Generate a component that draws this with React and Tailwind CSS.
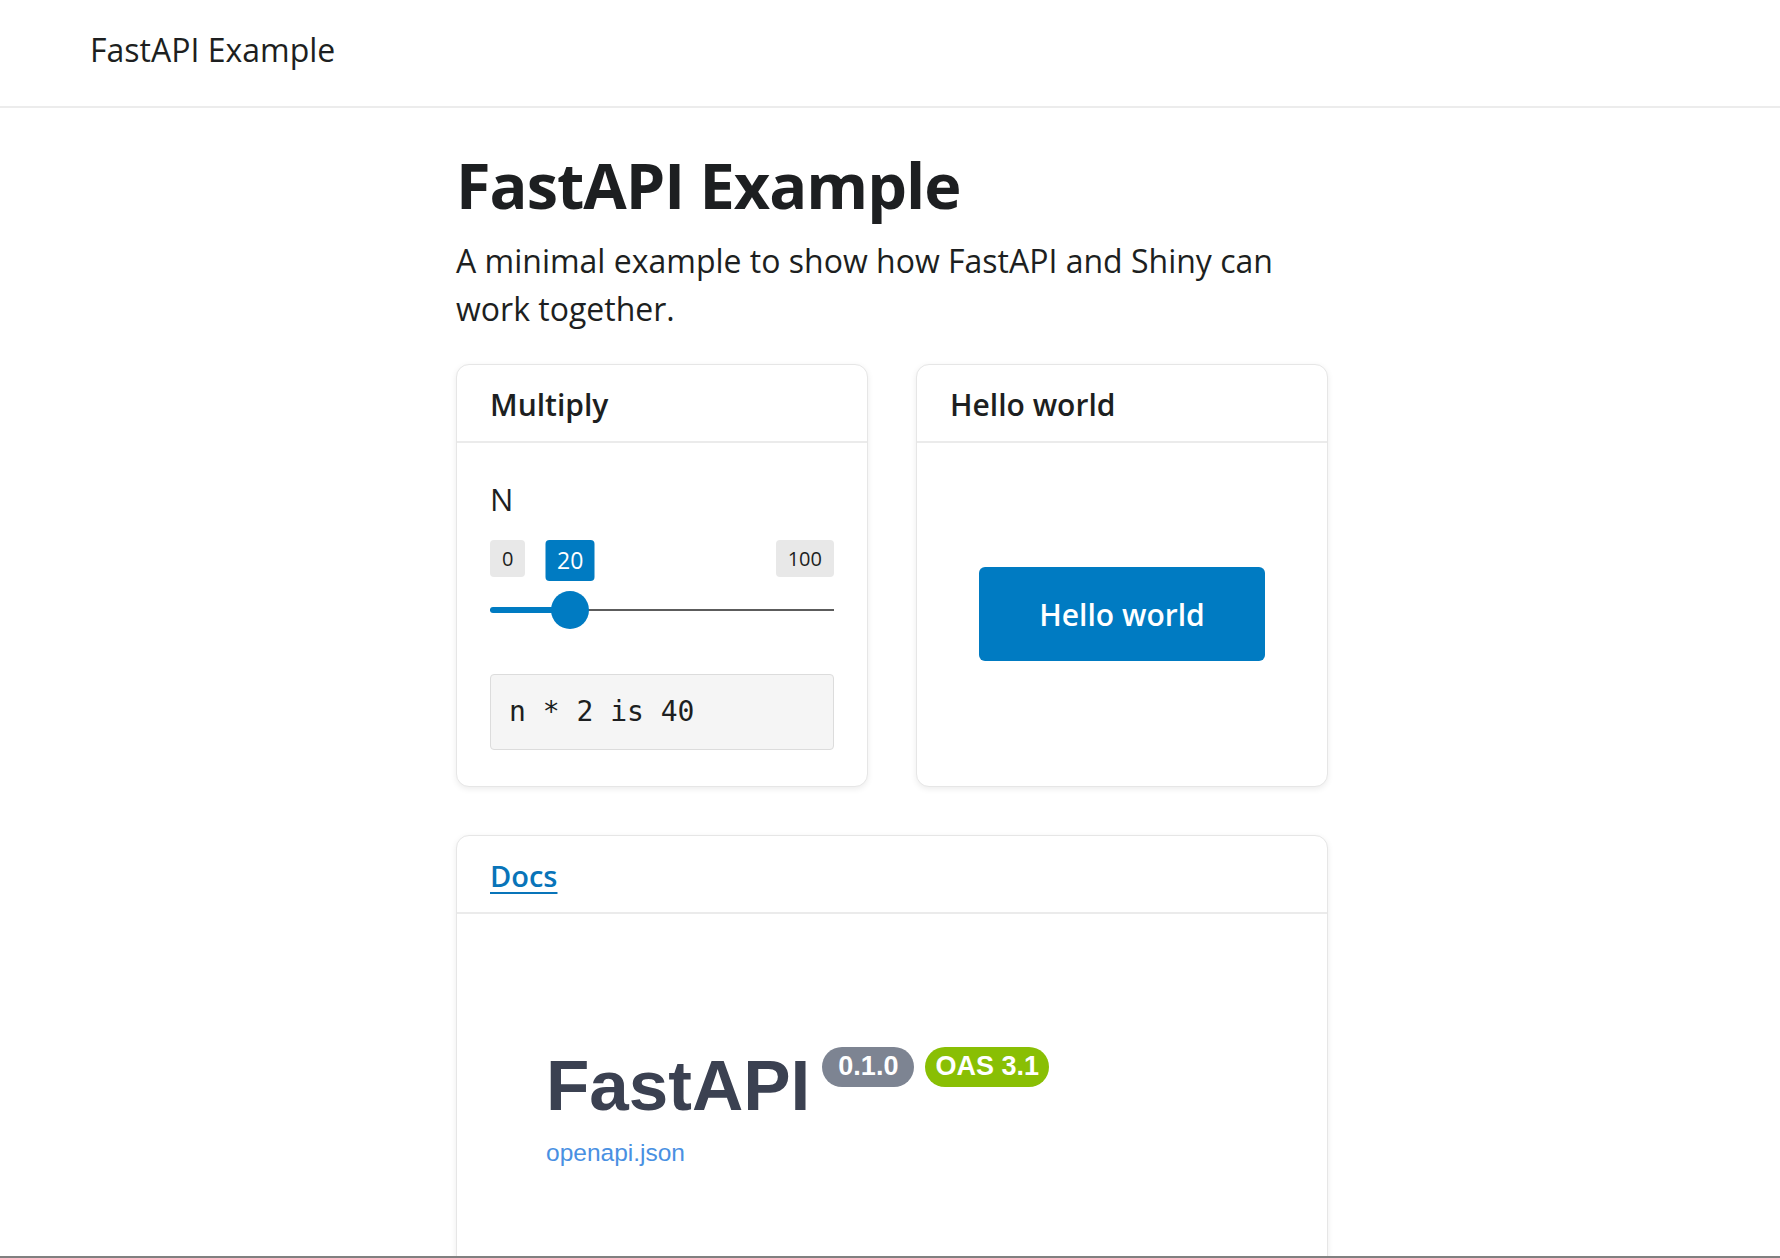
import React from 'react'

const sans = { fontFamily: '"Open Sans", "Noto Sans", sans-serif' }

const Card = ({ header, children, className = '' }) => (
  <div className={`bg-white border border-[#e6e6e6] rounded-[13px] shadow-[0_2px_6px_rgba(0,0,0,0.08)] flex flex-col ${className}`}>
    <div className="h-[78px] px-[33px] pt-[4px] flex items-center border-b-2 border-[#ebebeb]">
      {header}
    </div>
    {children}
  </div>
)

const Slider = ({ min = 0, max = 100, value = 20 }) => {
  const width = 344
  const r = 19
  const pos = r + ((width - 2 * r) * (value - min)) / (max - min)
  return (
    <div className="relative mt-[18px] h-[90px]">
      <div className="flex justify-between">
        <span className="h-[37px] px-[12px] flex items-center rounded-[4px] bg-[#e8e8e8] text-[20px] text-[#1d1f21]">{min}</span>
        <span className="h-[37px] px-[12px] flex items-center rounded-[4px] bg-[#e8e8e8] text-[20px] text-[#1d1f21]">{max}</span>
      </div>
      <span
        className="absolute top-0 h-[41px] w-[49px] -translate-x-1/2 flex items-center justify-center rounded-[4px] bg-[#007bc2] text-[23px] text-white"
        style={{ left: pos }}
      >
        {value}
      </span>
      <div className="absolute left-0 right-0 top-[69px] h-[2px] bg-[#5c5c5c]" />
      <div className="absolute left-0 top-[67px] h-[6px] rounded-l-full bg-[#007bc2]" style={{ width: pos }} />
      <div
        className="absolute top-[51px] h-[38px] w-[38px] -translate-x-1/2 rounded-full bg-[#007bc2]"
        style={{ left: pos }}
      />
    </div>
  )
}

export default function App() {
  return (
    <div className="min-h-screen bg-white text-[#1d1f21]" style={sans}>
      {/* Navbar */}
      <div className="h-[108px] border-b-2 border-[#ececec] flex items-center pl-[90px] pb-[6px]">
        <span className="text-[32px] leading-none">FastAPI Example</span>
      </div>

      <div className="w-[872px] ml-[456px] pt-[39px]">
        <h1 className="text-[63px] font-bold leading-[1.2] tracking-[-1px] text-[#1d1f21]">FastAPI Example</h1>
        <p className="mt-[14px] text-[32px] leading-[48px]">
          A minimal example to show how FastAPI and Shiny can work together.
        </p>

        <div className="grid grid-cols-2 gap-[48px] mt-[31px]">
          <Card header={<span className="text-[30px] font-semibold">Multiply</span>} className="h-[423px]">
            <div className="px-[33px] pt-[33px]">
              <div className="text-[31px] leading-[1.5]">N</div>
              <Slider />
              <div className="mt-[44px] h-[76px] border border-[#dcdcdc] rounded-[4px] bg-[#f5f5f5] flex items-center px-[18px]">
                <span className="text-[28px] text-[#1d1f21]" style={{ fontFamily: '"DejaVu Sans Mono", monospace' }}>
                  n * 2 is 40
                </span>
              </div>
            </div>
          </Card>

          <Card header={<span className="text-[30px] font-semibold">Hello world</span>} className="h-[423px]">
            <div className="flex-1 flex items-center justify-center">
              <button className="w-[286px] h-[94px] rounded-[6px] bg-[#007bc2] text-white text-[30px] font-semibold">
                Hello world
              </button>
            </div>
          </Card>
        </div>

        <Card
          header={
            <a href="#" className="text-[29px] font-semibold text-[#0874b9] underline underline-offset-[5px] decoration-2">
              Docs
            </a>
          }
          className="mt-[48px] h-[600px]"
        >
          <div className="pl-[89px] pt-[136px]" style={{ fontFamily: '"Liberation Sans", Arial, sans-serif' }}>
            <div className="flex items-start">
              <span className="text-[71px] font-bold leading-none text-[#3b4151]">FastAPI</span>
              <span className="ml-[12px] mt-[-3px] h-[40px] px-[16px] flex items-center rounded-full bg-[#7d8492] text-white text-[27px] font-bold">
                0.1.0
              </span>
              <span className="ml-[11px] mt-[-3px] h-[40px] px-[10px] flex items-center rounded-full bg-[#89bf04] text-white text-[27px] font-bold">
                OAS 3.1
              </span>
            </div>
            <a href="#" className="block mt-[17px] text-[24.5px] leading-[1.2] text-[#4990e2]">
              openapi.json
            </a>
          </div>
        </Card>
      </div>

      <div className="fixed bottom-0 left-0 right-0 h-[2px] bg-[#808080]" />
    </div>
  )
}
